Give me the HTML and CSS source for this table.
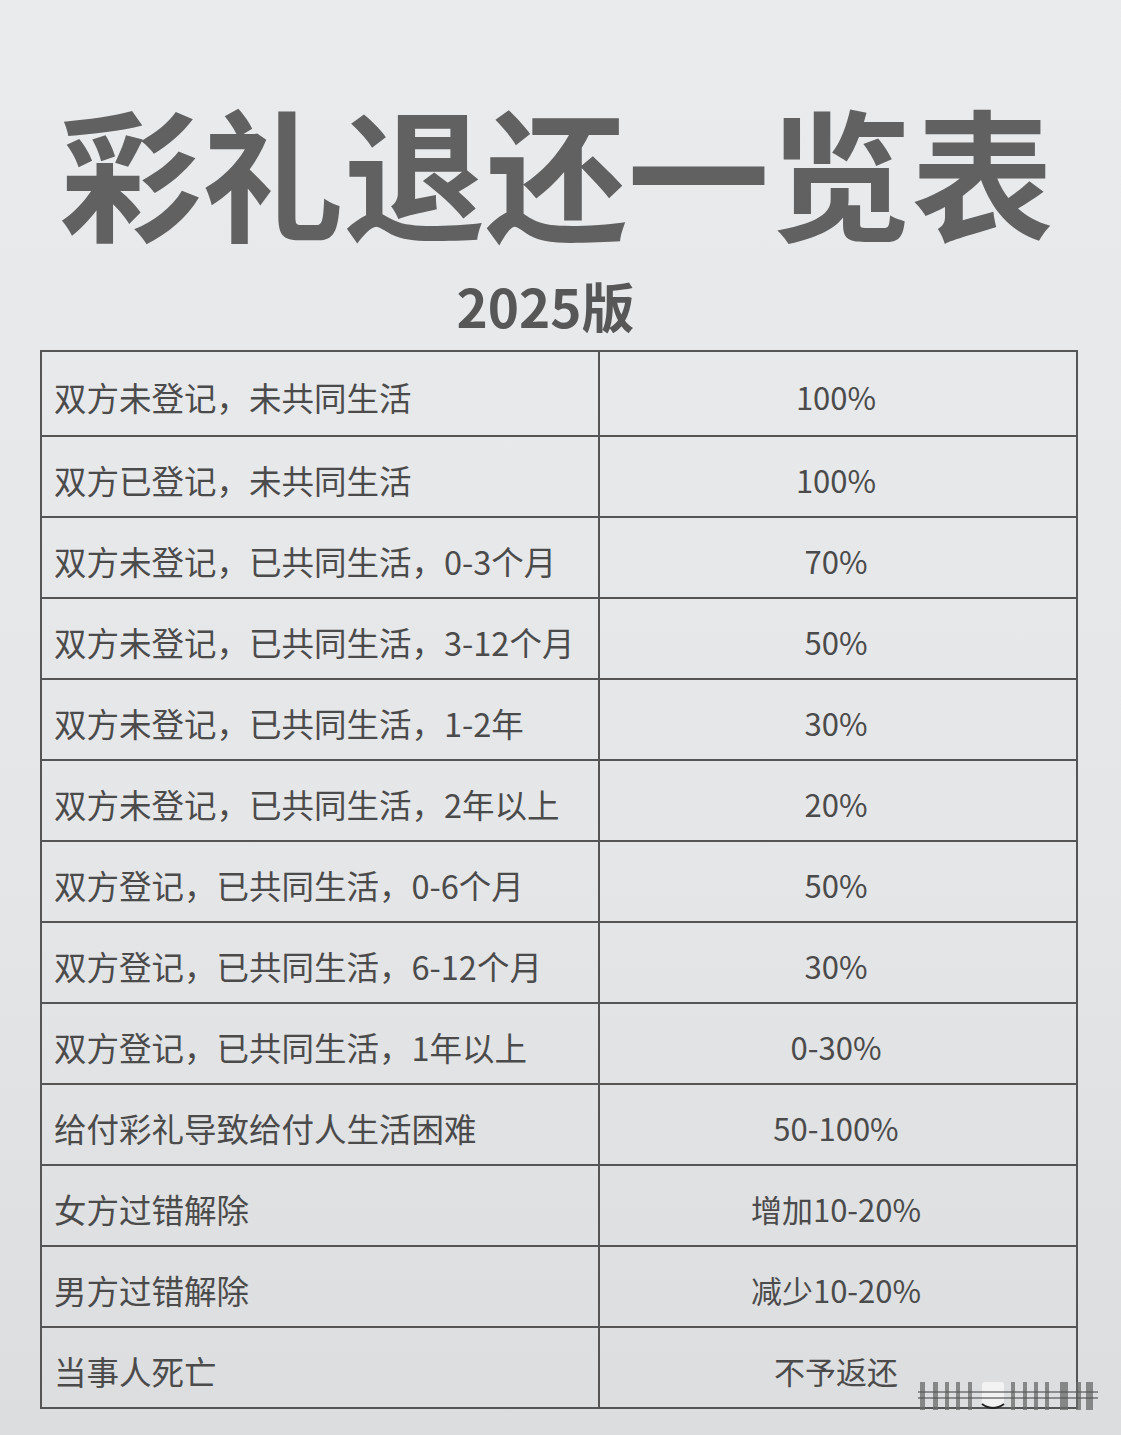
FILE: index.html
```html
<!DOCTYPE html>
<html lang="zh-CN">
<head>
<meta charset="utf-8">
<title>彩礼退还一览表</title>
<link rel="stylesheet" href="styles.css">
</head>
<body>
<main class="page">
  <h1 class="title">彩礼退还一览表</h1>
  <div class="subtitle">2025版</div>
  <div class="table">
    <div class="row"><div class="cell left">双方未登记，未共同生活</div><div class="cell right">100%</div></div>
    <div class="row"><div class="cell left">双方已登记，未共同生活</div><div class="cell right">100%</div></div>
    <div class="row"><div class="cell left">双方未登记，已共同生活，0-3个月</div><div class="cell right">70%</div></div>
    <div class="row"><div class="cell left">双方未登记，已共同生活，3-12个月</div><div class="cell right">50%</div></div>
    <div class="row"><div class="cell left">双方未登记，已共同生活，1-2年</div><div class="cell right">30%</div></div>
    <div class="row"><div class="cell left">双方未登记，已共同生活，2年以上</div><div class="cell right">20%</div></div>
    <div class="row"><div class="cell left">双方登记，已共同生活，0-6个月</div><div class="cell right">50%</div></div>
    <div class="row"><div class="cell left">双方登记，已共同生活，6-12个月</div><div class="cell right">30%</div></div>
    <div class="row"><div class="cell left">双方登记，已共同生活，1年以上</div><div class="cell right">0-30%</div></div>
    <div class="row"><div class="cell left">给付彩礼导致给付人生活困难</div><div class="cell right">50-100%</div></div>
    <div class="row"><div class="cell left">女方过错解除</div><div class="cell right">增加10-20%</div></div>
    <div class="row"><div class="cell left">男方过错解除</div><div class="cell right">减少10-20%</div></div>
    <div class="row"><div class="cell left">当事人死亡</div><div class="cell right">不予返还</div></div>
  </div>
  <svg class="watermark" width="180" height="34" viewBox="0 0 180 34" aria-hidden="true">
    <g fill="#6a6a6a" opacity="0.75">
      <rect x="2" y="4" width="5" height="28"/>
      <rect x="15" y="4" width="5" height="28"/>
      <rect x="27" y="4" width="4" height="28"/>
      <rect x="38" y="4" width="4" height="28"/>
      <rect x="50" y="4" width="4" height="28"/>
      <rect x="93" y="4" width="4" height="28"/>
      <rect x="105" y="4" width="4" height="28"/>
      <rect x="116" y="4" width="4" height="28"/>
      <rect x="127" y="4" width="4" height="28"/>
      <rect x="142" y="4" width="8" height="28"/>
      <rect x="158" y="4" width="5" height="28"/>
      <rect x="168" y="4" width="7" height="28"/>
    </g>
    <rect x="64" y="4" width="22" height="24" rx="3" fill="#f2f2f2"/>
    <path d="M64 26 q11 8 22 0" stroke="#222" stroke-width="2" fill="none"/>
    <rect x="0" y="13" width="180" height="2" fill="#555" opacity="0.6"/>
    <rect x="0" y="19" width="180" height="2" fill="#555" opacity="0.6"/>
  </svg>
</main>
</body>
</html>
```
FILE: styles.css
```css
html, body {
  margin: 0;
  padding: 0;
}
body {
  background: #e6e7e9;
  font-family: "Noto Sans CJK SC", "Noto Sans", sans-serif;
  color: #4a4a4a;
}
.page {
  position: relative;
  width: 1121px;
  height: 1435px;
  padding-top: 98px;
  box-sizing: border-box;
  background: linear-gradient(180deg, #eaebed 0%, #e5e6e8 60%, #dcdddf 100%);
}
.title {
  margin: 0;
  height: 143px;
  text-align: center;
  font-size: 142px;
  line-height: 143px;
  font-weight: 700;
  color: #616161;
  letter-spacing: 0;
  padding-right: 8px;
}
.subtitle {
  margin-top: 37px;
  height: 54px;
  text-align: center;
  font-size: 53px;
  line-height: 54px;
  font-weight: 700;
  color: #575757;
  padding-right: 30px;
}
.table {
  margin: 18px 0 0 40px;
  width: 1038px;
  border: 2px solid #555;
  box-sizing: border-box;
  display: flex;
  flex-direction: column;
}
.row {
  display: flex;
  height: 81px;
  border-top: 2px solid #555;
  box-sizing: border-box;
}
.row:first-child {
  border-top: none;
  height: 83px;
}
.cell {
  display: flex;
  align-items: center;
  font-size: 32.5px;
  color: #4b4b4b;
  padding-top: 5px;
  box-sizing: border-box;
}
.left {
  width: 558px;
  border-right: 2px solid #555;
  padding-left: 12px;
}
.right {
  flex: 1;
  justify-content: center;
  font-size: 31px;
  padding-right: 4px;
}
.watermark {
  position: absolute;
  left: 918px;
  top: 1378px;
}
```
